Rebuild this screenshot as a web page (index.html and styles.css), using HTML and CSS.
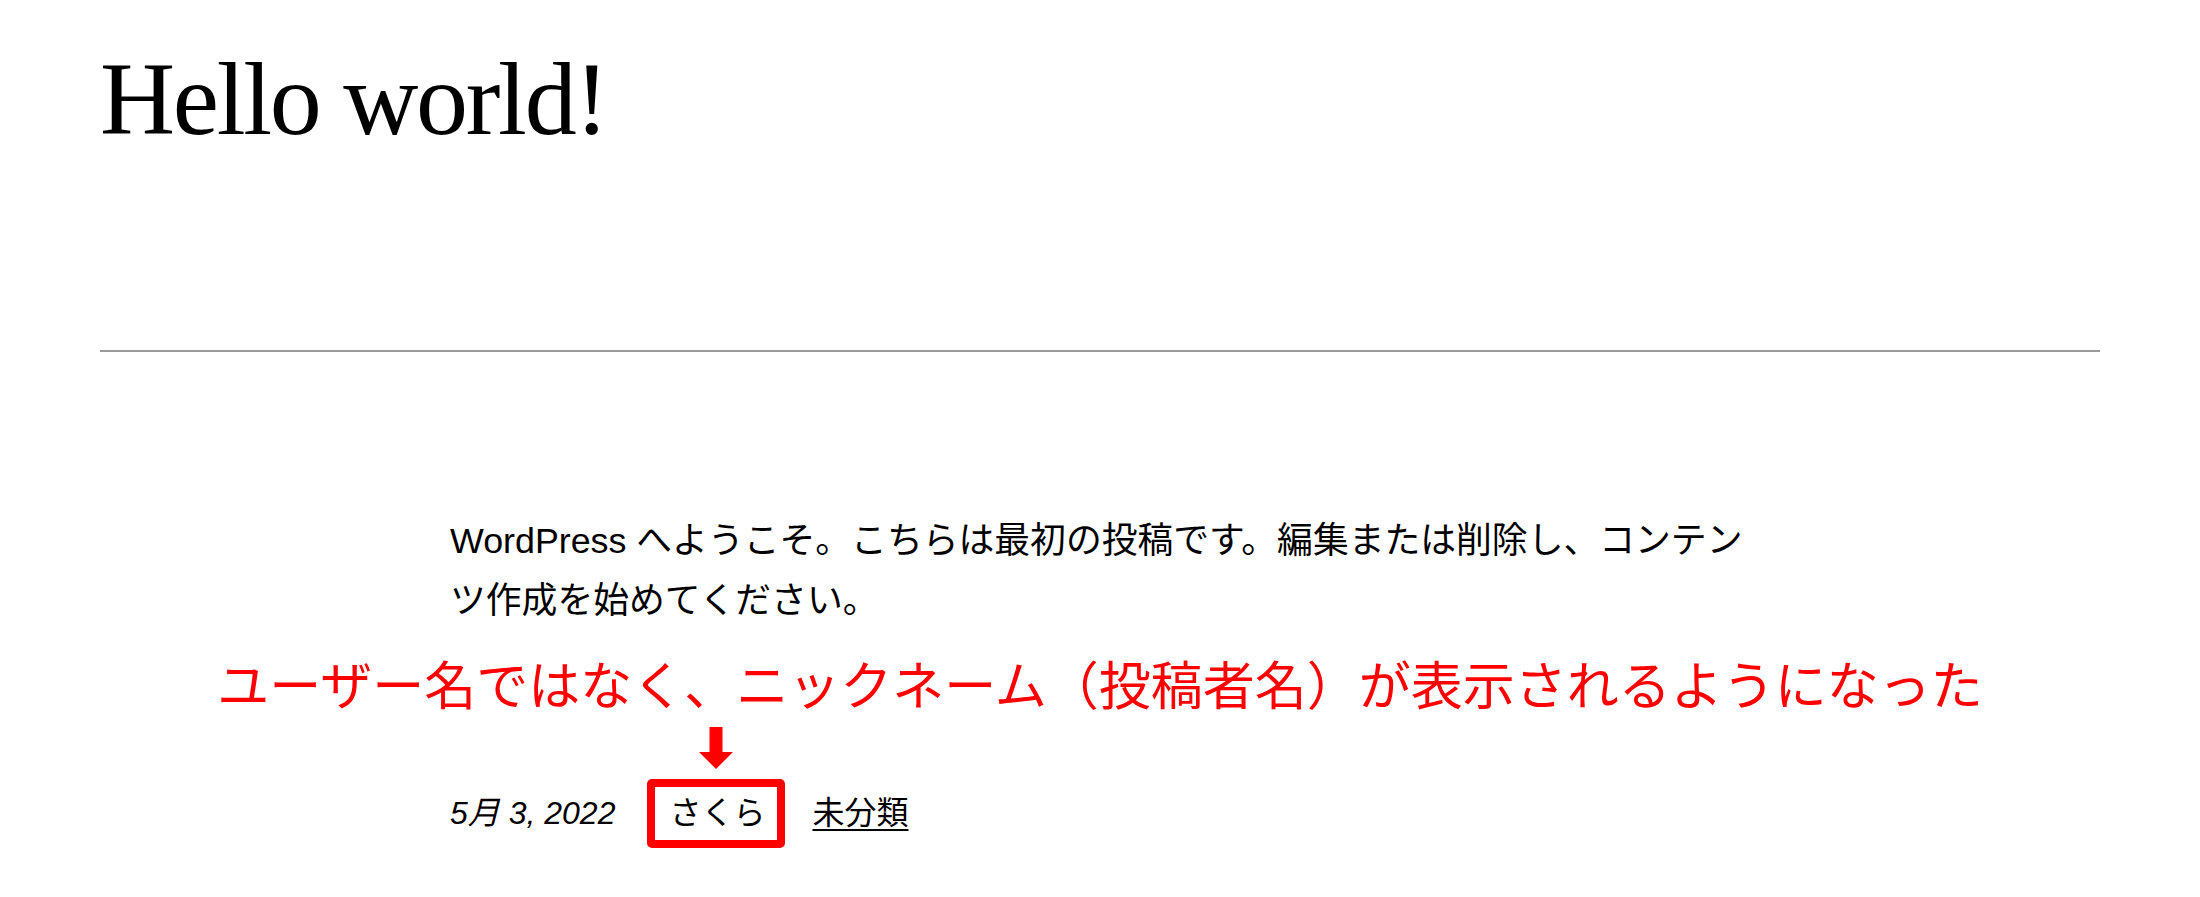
FILE: index.html
```html
<!DOCTYPE html>
<html lang="ja">
<head>
    <meta charset="UTF-8">
    <meta name="viewport" content="width=device-width, initial-scale=1.0">
    <title>Hello world!</title>
    <link rel="stylesheet" href="styles.css">
</head>
<body>
    <header class="post-header">
        <h1 class="post-title">Hello world!</h1>
    </header>

    <hr class="separator">

    <main class="entry">
        <p class="entry-text">WordPress へようこそ。こちらは最初の投稿です。編集または削除し、コンテンツ作成を始めてください。</p>
    </main>

    <div class="note">ユーザー名ではなく、ニックネーム（投稿者名）が表示されるようになった</div>

    <div class="entry">
        <div class="post-meta">
            <span class="post-date">5月 3, 2022</span>
            <span class="post-author">さくら<svg class="arrow" width="34" height="42" viewBox="0 0 34 42"><rect x="10.5" y="0" width="13" height="25" fill="#ff0000"/><polygon points="0,25 34,25 17,42" fill="#ff0000"/></svg></span>
            <a class="post-cat" href="#">未分類</a>
        </div>
    </div>
</body>
</html>
```

FILE: styles.css
```css
body {
    margin: 0;
    padding: 0;
    background-color: #fff;
    color: #000;
    font-family: "Liberation Sans", "Noto Sans CJK JP", sans-serif;
}

.post-header {
    padding: 47px 100px 0;
}

.post-title {
    margin: 0;
    font-family: "Liberation Serif", serif;
    font-weight: normal;
    font-size: 104px;
    line-height: 104px;
    letter-spacing: -2.3px;
}

.separator {
    margin: 199px 100px 0;
    border: 0;
    border-top: 2px solid #9a9a9a;
    height: 0;
}

.entry {
    width: 1300px;
    margin: 0 auto;
}

.entry-text {
    margin: 159px 0 0;
    font-size: 35.8px;
    line-height: 60px;
}

.note {
    margin-top: 26px;
    text-align: center;
    color: #ff0000;
    font-family: "Noto Sans CJK JP", sans-serif;
    font-size: 52px;
    line-height: 52px;
}

.post-meta {
    display: flex;
    align-items: baseline;
    gap: 47px;
    margin-top: 70px;
    font-size: 32px;
    line-height: 1.6;
}

.post-date {
    font-style: italic;
    margin-right: 7px;
}

/* red frame around the author name */
.post-author {
    position: relative;
    height: 53px;
    line-height: 53px;
    padding: 0 12px 0 14px;
    margin: 0 -20px 0 -22px;
    border: 8px solid #ff0000;
    border-radius: 5px;
}

.arrow {
    position: absolute;
    left: 50%;
    top: -60px;
    transform: translateX(-50%);
}

.post-cat {
    color: #000;
    text-decoration: underline;
    text-decoration-thickness: 2px;
    text-underline-offset: 5px;
}
```
